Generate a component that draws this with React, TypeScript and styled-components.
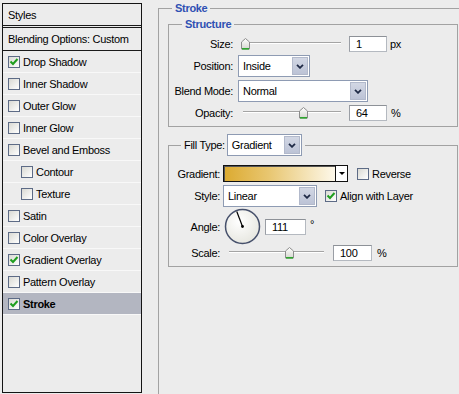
import React from 'react';
import styled, { createGlobalStyle } from 'styled-components';

const GlobalStyle = createGlobalStyle`
	html, body {
		margin: 0;
		padding: 0;
		background: #ececec;
		overflow: hidden;
	}
	body {
		font-family: 'Liberation Sans', Arial, sans-serif;
		font-size: 11px;
		letter-spacing: -0.3px;
		color: #000;
	}
`;

const Page = styled.div`
	display: flex;
	align-items: flex-start;
	width: 459px;
	height: 394px;
	overflow: hidden;
`;

/* ---------- left: styles list ---------- */

const Sidebar = styled.div`
	margin: 3px 0 0 2px;
	width: 140px;
	height: 390px;
	box-sizing: border-box;
	border: 1px solid #141414;
	display: flex;
	flex-direction: column;
	flex-shrink: 0;
`;

const SideHead = styled.div<{ $h: number; $double?: boolean }>`
	height: ${(p) => p.$h}px;
	padding-left: 5px;
	display: flex;
	align-items: center;
	border-bottom: ${(p) => (p.$double ? '3px double #1a1a1a' : '1px solid #1a1a1a')};
`;

const LayerRow = styled.div<{ $indent?: boolean; $active?: boolean }>`
	height: 21px;
	display: flex;
	align-items: center;
	gap: 3px;
	padding-left: ${(p) => (p.$indent ? 18 : 5)}px;
	border-bottom: 1px solid #f8f8f8;
	background: ${(p) => (p.$active ? '#b3b6c1' : 'transparent')};
	font-weight: ${(p) => (p.$active ? 'bold' : 'normal')};
`;

const Box = styled.span`
	width: 12px;
	height: 12px;
	box-sizing: border-box;
	border: 1px solid #5d6b86;
	background: linear-gradient(135deg, #d9d9d3, #ffffff);
	display: inline-flex;
	flex-shrink: 0;
`;

function CheckBox({ checked }: { checked?: boolean }) {
	return (
		<Box>
			{checked && (
				<svg width="10" height="10" viewBox="0 0 10 10">
					<path d="M1.5 4.5 L4 7 L8.5 2" fill="none" stroke="#1f9e1f" strokeWidth="2" />
				</svg>
			)}
		</Box>
	);
}

/* ---------- right: panel ---------- */

const Frame = styled.fieldset`
	margin: 1px 0 0 16px;
	padding: 2px 0 0 9px;
	border: 1px solid #a2a2a2;
	width: 330px;
	height: 410px;
	box-sizing: border-box;
	min-width: 0;
	flex-shrink: 0;
`;

const Title = styled.legend<{ $ml: number }>`
	margin-left: ${(p) => p.$ml}px;
	padding: 0 3px;
	line-height: 14px;
	font-weight: bold;
	color: #2f50b3;
`;

const Group = styled.fieldset<{ $pt: number; $pb: number; $mt?: number }>`
	margin: ${(p) => p.$mt || 0}px 0 0 0;
	padding: ${(p) => p.$pt}px 0 ${(p) => p.$pb}px 0;
	border: 1px solid #a2a2a2;
	width: 290px;
	box-sizing: border-box;
	min-width: 0;
`;

const FillLegend = styled.legend`
	margin-left: 12px;
	padding: 0 3px;
	display: flex;
	align-items: center;
	gap: 2px;
`;

const Row = styled.div<{ $h: number; $mt?: number }>`
	height: ${(p) => p.$h}px;
	margin-top: ${(p) => p.$mt || 0}px;
	display: flex;
	align-items: center;
`;

const Label = styled.span<{ $w: number }>`
	width: ${(p) => p.$w}px;
	text-align: right;
	flex-shrink: 0;
`;

const SelectBox = styled.div<{ $w: number; $ml: number }>`
	width: ${(p) => p.$w}px;
	margin-left: ${(p) => p.$ml}px;
	height: 22px;
	box-sizing: border-box;
	border: 1px solid #8e9bb3;
	background: #fff;
	display: flex;
	align-items: center;
	justify-content: space-between;
	padding-left: 4px;
	flex-shrink: 0;
`;

const ArrowBtn = styled.span`
	width: 16px;
	height: 18px;
	margin-right: 1px;
	box-sizing: border-box;
	border: 1px solid #b2b9cb;
	background: linear-gradient(#d2d7e4, #bcc3d6);
	display: flex;
	align-items: center;
	justify-content: center;
`;

function Select({ value, w, ml }: { value: string; w: number; ml: number }) {
	return (
		<SelectBox $w={w} $ml={ml}>
			<span>{value}</span>
			<ArrowBtn>
				<svg width="8" height="5" viewBox="0 0 8 5">
					<path d="M1 0.8 L4 3.8 L7 0.8" fill="none" stroke="#1f2a46" strokeWidth="1.8" />
				</svg>
			</ArrowBtn>
		</SelectBox>
	);
}

const NumInput = styled.div<{ $w: number; $ml: number }>`
	width: ${(p) => p.$w}px;
	margin-left: ${(p) => p.$ml}px;
	height: 16px;
	box-sizing: border-box;
	border: 1px solid #b4b9c0;
	border-top-color: #8d9197;
	border-left-color: #9a9ea5;
	background: #fff;
	padding-left: 6px;
	display: flex;
	align-items: center;
	flex-shrink: 0;
`;

const Unit = styled.span<{ $ml: number; $up?: number }>`
	margin-left: ${(p) => p.$ml}px;
	position: relative;
	top: ${(p) => -(p.$up || 0)}px;
`;

const SliderWrap = styled.div<{ $w: number; $ml: number }>`
	position: relative;
	width: ${(p) => p.$w}px;
	margin-left: ${(p) => p.$ml}px;
	height: 16px;
	flex-shrink: 0;
	background:
		linear-gradient(#a4a4a4, #a4a4a4) no-repeat 2px 6px / calc(100% - 2px) 1px,
		linear-gradient(#ffffff, #ffffff) no-repeat 2px 7px / calc(100% - 2px) 1px;
`;

const Thumb = styled.svg`
	position: absolute;
	top: 2px;
`;

function Slider({ w, ml, value }: { w: number; ml: number; value: number }) {
	return (
		<SliderWrap $w={w} $ml={ml}>
			<Thumb width="9" height="12" viewBox="0 0 9 12" style={{ left: Math.round(value * (w - 9)) }}>
				<defs>
					<linearGradient id="thumbFill" x1="0" y1="0" x2="0" y2="1">
						<stop offset="0" stopColor="#ffffff" />
						<stop offset="1" stopColor="#d6d6d0" />
					</linearGradient>
				</defs>
				<path d="M4.5 0.5 L8.5 4 L8.5 11 L0.5 11 L0.5 4 Z" fill="url(#thumbFill)" stroke="#8c8c8c" />
				<path d="M1 10.8 H8" stroke="#2ea52e" strokeWidth="1.6" />
			</Thumb>
		</SliderWrap>
	);
}

const GradientBox = styled.div`
	margin-left: 3px;
	width: 125px;
	height: 17px;
	box-sizing: border-box;
	border: 1px solid #111;
	display: flex;
	flex-shrink: 0;
`;

const GradientFill = styled.div`
	flex: 1;
	background: linear-gradient(to right, #dcaa30, #e8c670 40%, #fdf8ea);
	box-shadow: inset 1px 1px 0 #555;
`;

const GradArrow = styled.div`
	width: 11px;
	border-left: 1px solid #111;
	background: #fff;
	display: flex;
	align-items: center;
	justify-content: center;

	&::after {
		content: '';
		width: 0;
		height: 0;
		border-left: 3px solid transparent;
		border-right: 3px solid transparent;
		border-top: 3px solid #000;
	}
`;

const CheckLabel = styled.span<{ $ml: number }>`
	margin-left: ${(p) => p.$ml}px;
	display: flex;
	align-items: center;
	gap: 3px;
`;

function Dial({ angle }: { angle: number }) {
	const r = 17;
	const rad = (angle * Math.PI) / 180;
	const x = 18.5 + Math.cos(rad) * 16;
	const y = 18.5 - Math.sin(rad) * 16;
	return (
		<svg width="37" height="37" viewBox="0 0 37 37" style={{ marginLeft: 4, flexShrink: 0 }}>
			<defs>
				<radialGradient id="dialFill" cx="0.4" cy="0.35" r="0.7">
					<stop offset="0" stopColor="#ffffff" />
					<stop offset="1" stopColor="#e6e6df" />
				</radialGradient>
			</defs>
			<circle cx="18.5" cy="18.5" r={r} fill="url(#dialFill)" stroke="#46506b" strokeWidth="1.5" />
			<line x1="18.5" y1="18.5" x2={x} y2={y} stroke="#000" strokeWidth="1.2" />
			<circle cx="18.5" cy="18.5" r="1.4" fill="#000" />
		</svg>
	);
}

const layers = [
	{ name: 'Drop Shadow', checked: true },
	{ name: 'Inner Shadow' },
	{ name: 'Outer Glow' },
	{ name: 'Inner Glow' },
	{ name: 'Bevel and Emboss' },
	{ name: 'Contour', indent: true },
	{ name: 'Texture', indent: true },
	{ name: 'Satin' },
	{ name: 'Color Overlay' },
	{ name: 'Gradient Overlay', checked: true },
	{ name: 'Pattern Overlay' },
	{ name: 'Stroke', checked: true, active: true }
];

export default function App() {
	return (
		<Page>
			<GlobalStyle />
			<Sidebar>
				<SideHead $h={21} $double>
					Styles
				</SideHead>
				<SideHead $h={22}>Blending Options: Custom</SideHead>
				{layers.map((layer) => (
					<LayerRow key={layer.name} $indent={layer.indent} $active={layer.active}>
						<CheckBox checked={layer.checked} />
						{layer.name}
					</LayerRow>
				))}
			</Sidebar>

			<Frame>
				<Title $ml={4}>Stroke</Title>
				<Group $pt={5} $pb={5}>
					<Title $ml={13}>Structure</Title>
					<Row $h={16}>
						<Label $w={64}>Size:</Label>
						<Slider w={100} ml={8} value={0} />
						<NumInput $w={38} $ml={8}>1</NumInput>
						<Unit $ml={3}>px</Unit>
					</Row>
					<Row $h={22} $mt={3}>
						<Label $w={64}>Position:</Label>
						<Select value="Inside" w={72} ml={5} />
					</Row>
					<Row $h={22} $mt={3}>
						<Label $w={64}>Blend Mode:</Label>
						<Select value="Normal" w={130} ml={5} />
					</Row>
					<Row $h={16} $mt={3}>
						<Label $w={64}>Opacity:</Label>
						<Slider w={100} ml={8} value={0.64} />
						<NumInput $w={38} $ml={8}>64</NumInput>
						<Unit $ml={4}>%</Unit>
					</Row>
				</Group>

				<Group $pt={9} $pb={5} $mt={7}>
					<FillLegend>
						<span>Fill Type:</span>
						<Select value="Gradient" w={75} ml={0} />
					</FillLegend>
					<Row $h={17}>
						<Label $w={51}>Gradient:</Label>
						<GradientBox>
							<GradientFill />
							<GradArrow />
						</GradientBox>
						<CheckLabel $ml={9}>
							<CheckBox />
							Reverse
						</CheckLabel>
					</Row>
					<Row $h={22} $mt={3}>
						<Label $w={51}>Style:</Label>
						<Select value="Linear" w={94} ml={3} />
						<CheckLabel $ml={8}>
							<CheckBox checked />
							Align with Layer
						</CheckLabel>
					</Row>
					<Row $h={37} $mt={1}>
						<Label $w={51}>Angle:</Label>
						<Dial angle={111} />
						<NumInput $w={41} $ml={4}>111</NumInput>
						<Unit $ml={4} $up={3}>°</Unit>
					</Row>
					<Row $h={16}>
						<Label $w={51}>Scale:</Label>
						<Slider w={97} ml={7} value={0.66} />
						<NumInput $w={39} $ml={9}>100</NumInput>
						<Unit $ml={5}>%</Unit>
					</Row>
				</Group>
			</Frame>
		</Page>
	);
}
